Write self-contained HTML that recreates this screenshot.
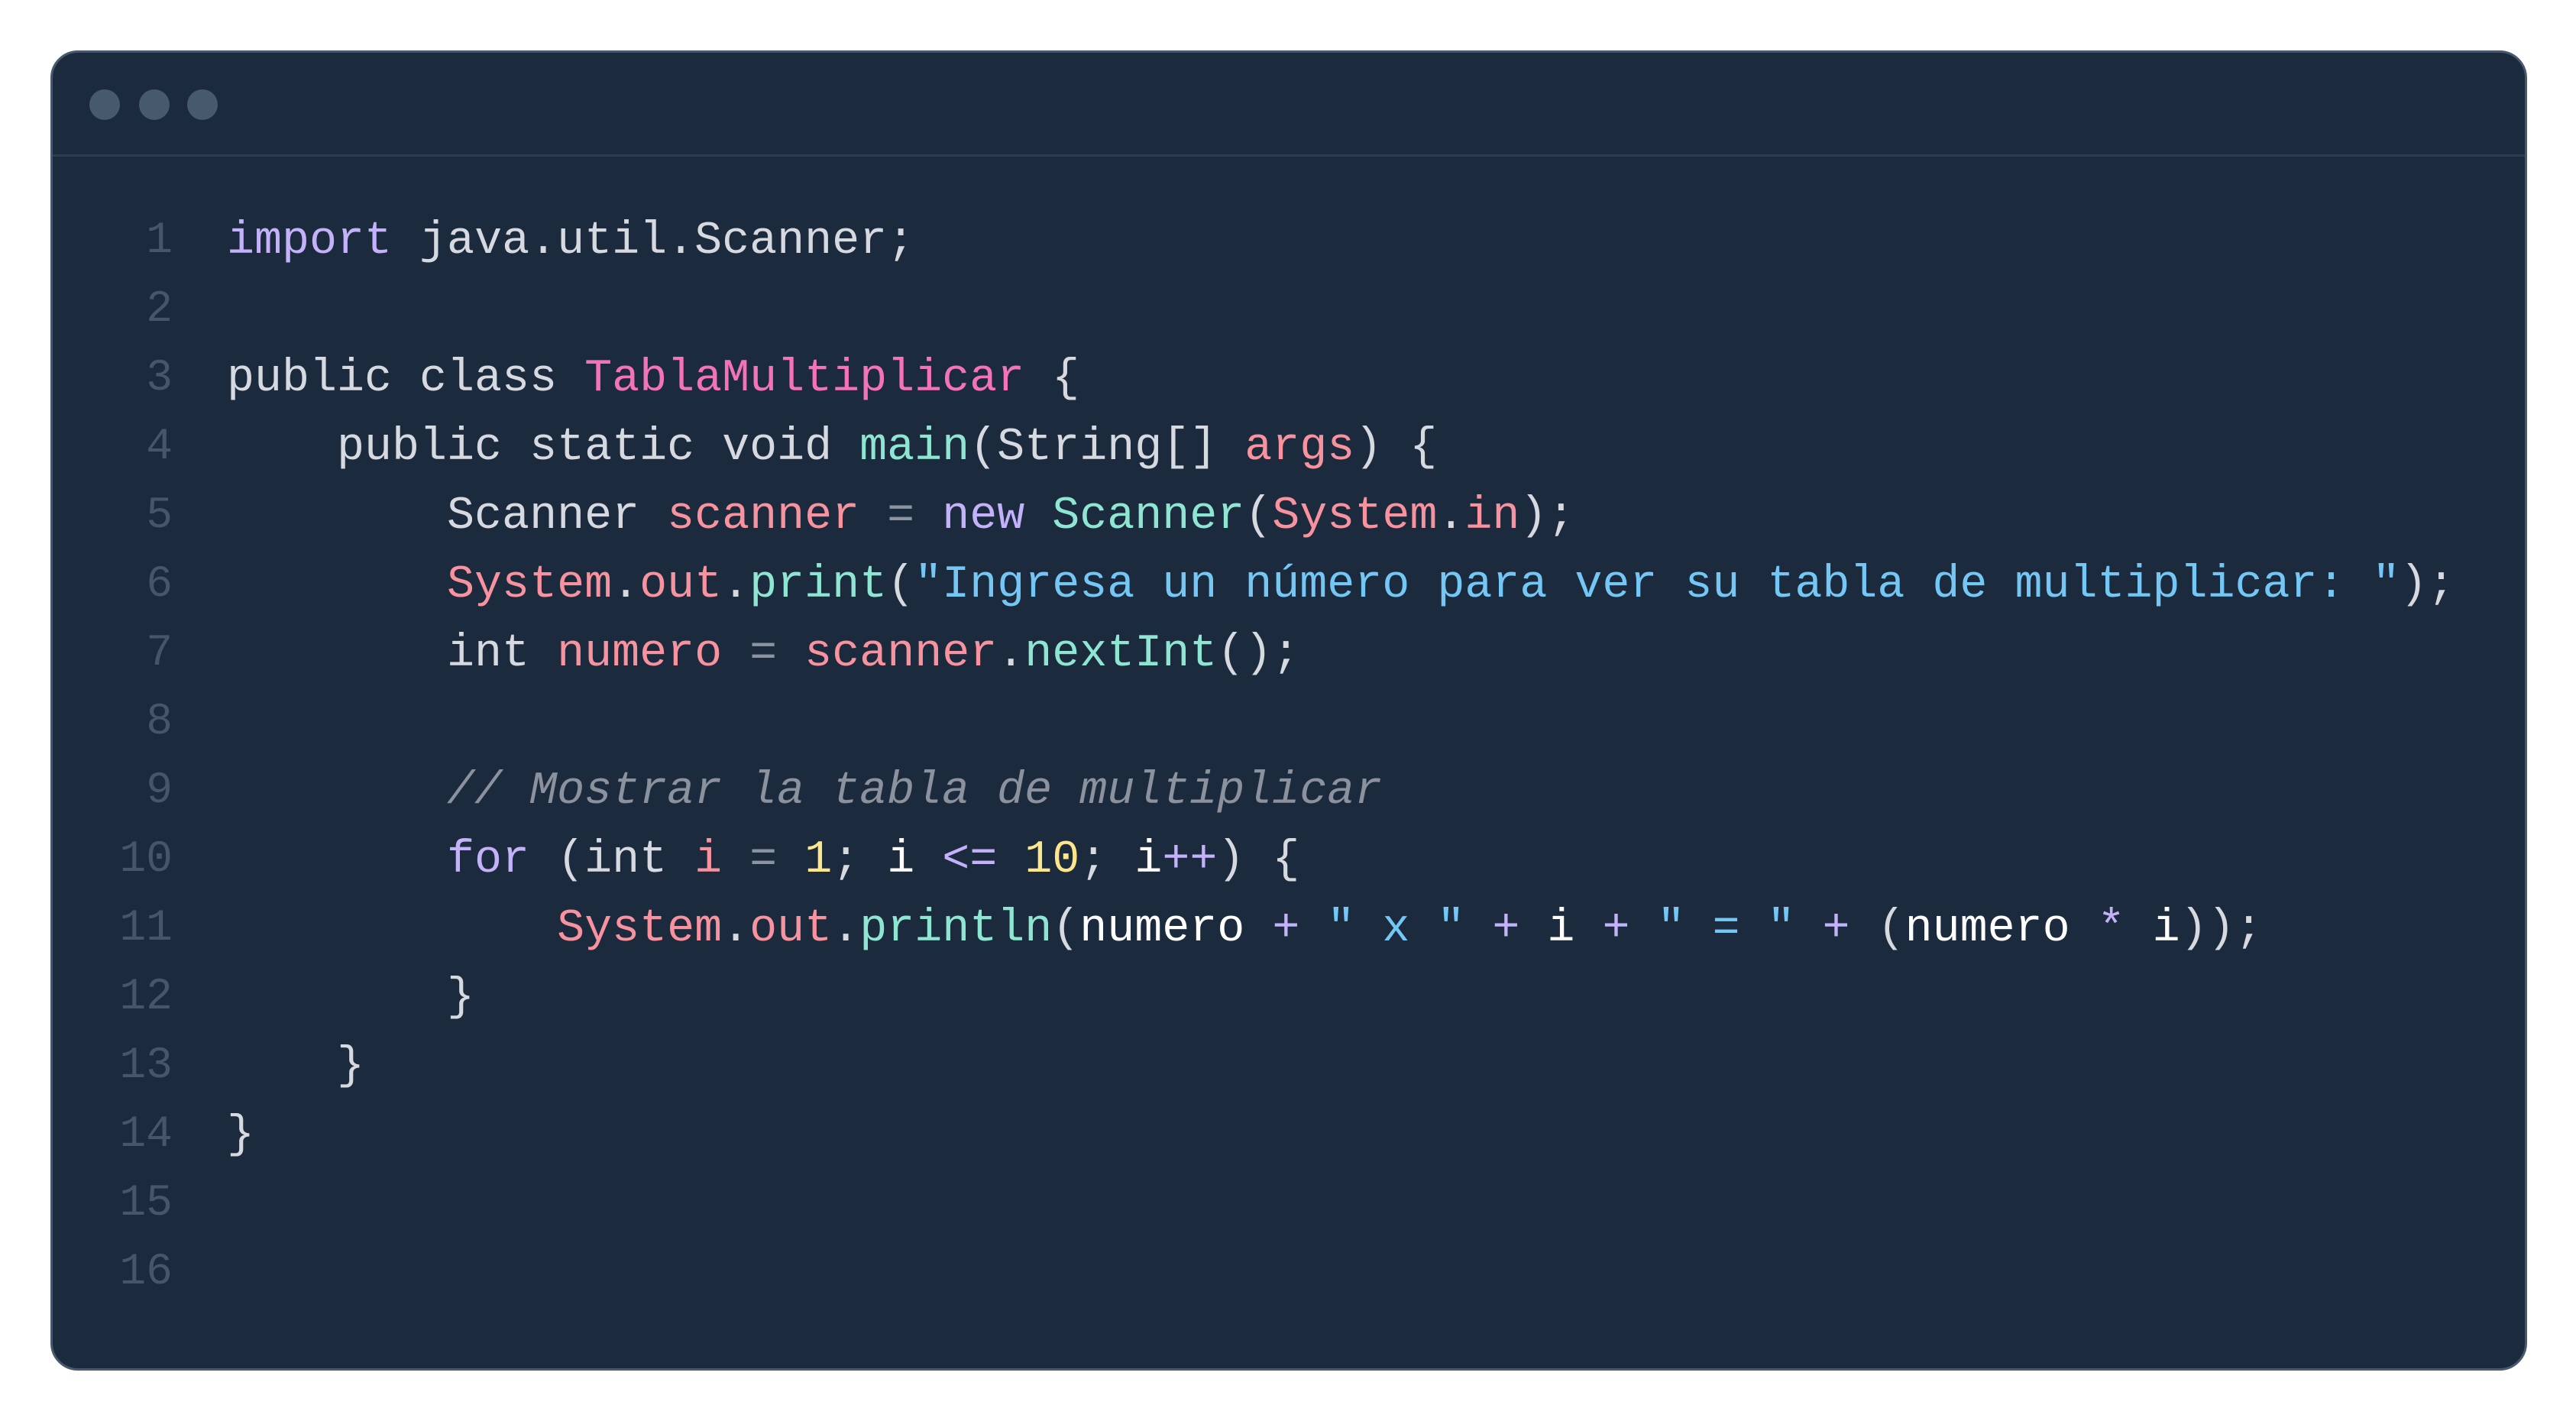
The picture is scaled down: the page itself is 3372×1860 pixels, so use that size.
<!DOCTYPE html>
<html><head><meta charset="utf-8"><style>
html,body{margin:0;padding:0;background:#fff;width:3372px;height:1860px;overflow:hidden}
.card{position:absolute;left:66px;top:66px;width:3236px;height:1722px;background:#1c2a3d;border:3px solid #475a6d;border-radius:36px;box-sizing:content-box}
.dot{position:absolute;top:48px;width:40px;height:40px;border-radius:50%;background:#475a6d}
.sep{position:absolute;left:0;right:0;top:133px;height:3px;background:#2e3d50}
pre{margin:0;font-family:"Liberation Mono","DejaVu Sans Mono",monospace;font-size:60px;line-height:90px;position:absolute;top:202px;color:#d6d9e0}
.ln{left:15px;width:142px;text-align:right;color:#475569;font-size:58px}
.code{left:228px}
.k{color:#c3b1fa}.c{color:#f472b6}.f{color:#8ee6d2}.v{color:#f7929e}.s{color:#74c7f5}.n{color:#fde58a}.m{color:#8b929e;font-style:italic}.o{color:#8a94a3}.w{color:#fff}.p{color:#c3b1fa}
</style></head><body>
<div class="card">
<div class="dot" style="left:48px"></div><div class="dot" style="left:113px"></div><div class="dot" style="left:176px"></div>
<div class="sep"></div>
<pre class="ln">1
2
3
4
5
6
7
8
9
10
11
12
13
14
15
16</pre>
<pre class="code"><span class="k">import</span> java.util.Scanner;

public class <span class="c">TablaMultiplicar</span> {
    public static void <span class="f">main</span>(String[] <span class="v">args</span>) {
        Scanner <span class="v">scanner</span> <span class="o">=</span> <span class="k">new</span> <span class="f">Scanner</span>(<span class="v">System</span>.<span class="v">in</span>);
        <span class="v">System</span>.<span class="v">out</span>.<span class="f">print</span>(<span class="s">"Ingresa un número para ver su tabla de multiplicar: "</span>);
        int <span class="v">numero</span> <span class="o">=</span> <span class="v">scanner</span>.<span class="f">nextInt</span>();

        <span class="m">// Mostrar la tabla de multiplicar</span>
        <span class="k">for</span> (int <span class="v">i</span> <span class="o">=</span> <span class="n">1</span>; <span class="w">i</span> <span class="p">&lt;=</span> <span class="n">10</span>; <span class="w">i</span><span class="p">++</span>) {
            <span class="v">System</span>.<span class="v">out</span>.<span class="f">println</span>(<span class="w">numero</span> <span class="p">+</span> <span class="s">" x "</span> <span class="p">+</span> <span class="w">i</span> <span class="p">+</span> <span class="s">" = "</span> <span class="p">+</span> (<span class="w">numero</span> <span class="p">*</span> <span class="w">i</span>));
        }
    }
}</pre>
</div>
</body></html>
